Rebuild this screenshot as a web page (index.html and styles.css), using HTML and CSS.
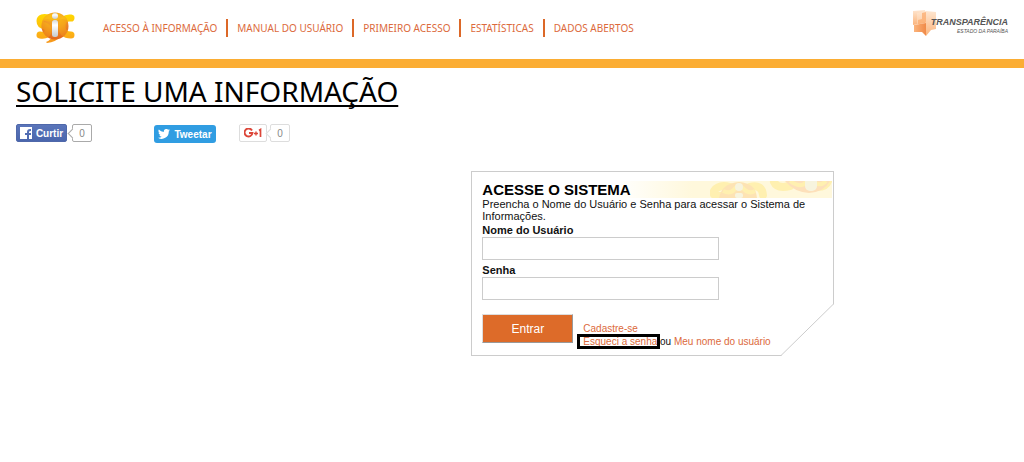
FILE: index.html
```html
<!DOCTYPE html>
<html lang="pt-BR">
<head>
<meta charset="utf-8">
<title>Solicite uma informação</title>
<link rel="stylesheet" href="styles.css">
</head>
<body>
<header class="top">
  <a class="sic" href="#" aria-label="SIC">
    <svg width="40" height="32" viewBox="0 0 40 32">
      <defs>
        <radialGradient id="ball" cx=".5" cy=".2" r=".8"><stop offset="0" stop-color="#f9b01c"/><stop offset=".5" stop-color="#f09428"/><stop offset="1" stop-color="#e2661f"/></radialGradient>
        <linearGradient id="pearl" x1="0" y1="0" x2="0" y2="1"><stop offset="0" stop-color="#d5d7d9"/><stop offset=".3" stop-color="#fff"/><stop offset="1" stop-color="#c5cace"/></linearGradient>
        <linearGradient id="gs" gradientUnits="userSpaceOnUse" x1="0" y1="2" x2="0" y2="28"><stop offset="0" stop-color="#ffd800"/><stop offset="1" stop-color="#fba51a"/></linearGradient>
        <clipPath id="disc"><circle cx="19" cy="14" r="13.500"/></clipPath>
      </defs>
      <path d="M10 30Q15 28 16 24L24 25Q20 30 11 31Z" fill="#f79a1c"/>
      <g id="letters" fill="none" stroke="url(#gs)" stroke-width="7" stroke-linecap="round">
        <path d="M13 6Q4 4 4 9Q4 13 9 14Q13 16 12 20Q11 24 4 23"/>
        <path d="M35 6Q26 5 26 14.500Q26 23 35 23"/>
      </g>
      <circle cx="19" cy="14" r="13.500" fill="url(#ball)"/>
      <use href="#letters" opacity=".35" clip-path="url(#disc)"/>
      <path d="M7 8Q11 1 19 1Q27 1 31 8Q25 6 19 9Q13 6 7 8Z" fill="#ffc715" opacity=".5"/>
      <circle cx="19" cy="4" r="3" fill="url(#pearl)"/>
      <rect x="16" y="8" width="6" height="17" rx="2.500" fill="url(#pearl)"/>
    </svg>
  </a>
  <nav class="menu">
    <a href="#">ACESSO À INFORMAÇÃO</a>
    <a href="#">MANUAL DO USUÁRIO</a>
    <a href="#">PRIMEIRO ACESSO</a>
    <a href="#">ESTATÍSTICAS</a>
    <a href="#">DADOS ABERTOS</a>
  </nav>
  <a class="transparency" href="#">
    <svg width="24" height="28" viewBox="0 0 24 28">
      <defs>
        <linearGradient id="pale" x1="0" y1="0" x2="0" y2="1"><stop offset="0" stop-color="#fee6d0"/><stop offset="1" stop-color="#fbb47c"/></linearGradient>
        <linearGradient id="deep" x1="0" y1="0" x2="1" y2="0"><stop offset="0" stop-color="#fbb47c"/><stop offset="1" stop-color="#f08a48"/></linearGradient>
      </defs>
      <path d="M0 1L12 0V13L0 15Z" fill="url(#pale)"/>
      <path d="M4 3L13 1L23 2V19L18 20L13 26V12L4 14Z" fill="url(#pale)"/>
      <path d="M9 3L13 2V13L5 14V10L9 9Z" fill="#fba868" opacity=".7"/>
      <path d="M1 15L13 13V26L9 22L1 22Z" fill="url(#deep)"/>
    </svg>
    <span class="transparency-text"><b>TRANSPARÊNCIA</b><i>ESTADO DA PARAÍBA</i></span>
  </a>
</header>
<main>
  <h1>SOLICITE UMA INFORMAÇÃO</h1>
  <div class="social">
    <div class="share like">
      <button type="button" class="fb"><svg width="12" height="12" viewBox="0 0 12 12"><path d="M0 0H12V12H9V8H11V6H9V5Q9 4 11 4V2Q7 1.500 7 5V6H5V8H7V12H0Z" fill="#fff"/></svg>Curtir</button>
      <span class="count">0</span>
    </div>
    <button type="button" class="tweet"><svg width="12" height="10" viewBox="0 0 24 20"><path d="M24 2.400a10 10 0 0 1-2.800.8A5 5 0 0 0 23.300.400a10 10 0 0 1-3.100 1.200A4.900 4.900 0 0 0 11.800 6 14 14 0 0 1 1.700.9a4.900 4.900 0 0 0 1.500 6.600 5 5 0 0 1-2.200-.6 4.900 4.900 0 0 0 3.900 4.900 5 5 0 0 1-2.200.1 4.900 4.900 0 0 0 4.600 3.400A10 10 0 0 1 0 17.400 14 14 0 0 0 21.500 5Z" fill="#fff"/></svg>Tweetar</button>
    <div class="share plus">
      <button type="button" class="google" aria-label="G+1"><svg width="18" height="10" viewBox="0 0 18 10" fill="none" stroke="#dc4639" stroke-width="1.900"><path d="M8 2.500A4 4 0 1 0 8.500 5H5"/><path d="M10 5.500H14M12 3.500V7.500" stroke-width="1.400"/><path d="M15 2.500L16.500 1.500V9" stroke-width="1.700"/></svg></button>
      <span class="count pale">0</span>
    </div>
  </div>
  <form class="login">
    <svg class="corner" width="53" height="52" viewBox="0 0 53 52"><path d="M53 0V52H0Z" fill="#fff"/><path d="M52.500 0L0 51.500" stroke="#ccc" fill="none"/></svg>
    <div class="banner">
      <h2>ACESSE O SISTEMA</h2>
      <svg width="122" height="17" viewBox="0 0 122 17">
        <g fill="none" stroke="#fff0b0" stroke-width="8" stroke-linecap="round"><path d="M17 14Q1 17 4 10Q9 3 20 6M40 6Q52 3 53 14"/><path d="M64 1Q67 8 80 5M100 5Q115 8 118 0"/></g>
        <path d="M9 17Q12 2 29 1Q46 2 47 17Z" fill="#fde3b4"/>
        <path d="M13 10Q22 14 26 6M32 6Q38 14 45 10" stroke="#fff0b0" stroke-width="4" fill="none"/>
        <path d="M75 0H120Q114 11 99 12Q84 11 75 0Z" fill="#fde0ba"/>
        <path d="M80 0Q91 8 96 1M104 1Q110 6 116 0" stroke="#fff0b0" stroke-width="4" fill="none"/>
        <g fill="#f7f4de"><circle cx="29" cy="6" r="4"/><rect x="25" y="12" width="8" height="5" rx="2"/><rect x="95" y="-4" width="12" height="14" rx="5"/></g>
      </svg>
    </div>
    <p>Preencha o Nome do Usuário e Senha para acessar o Sistema de Informações.</p>
    <label for="user">Nome do Usuário</label>
    <input id="user" type="text">
    <label for="password">Senha</label>
    <input id="password" type="password">
    <div class="actions">
      <button type="submit" class="enter">Entrar</button>
      <div class="links">
        <a href="#">Cadastre-se</a>
        <div><a class="marked" href="#">Esqueci a senha</a> ou <a href="#">Meu nome do usuário</a></div>
      </div>
    </div>
  </form>
</main>
</body>
</html>
```
FILE: styles.css
```css
* { box-sizing: border-box; }
body { margin: 0; background: #fff; color: #111; font-family: "Liberation Sans", Arial, sans-serif; }
a { color: #dc6a3c; text-decoration: none; }
svg { display: block; flex: none; }
button { font-family: inherit; padding: 0; cursor: pointer; }

.top { display: flex; align-items: center; height: 68px; padding: 0 16px 4px 36px; border-bottom: 9px solid #fbad33; }
.menu { display: flex; align-items: center; margin-left: 27px; font: 10px/18px "Noto Sans", sans-serif; }
.menu a { white-space: nowrap; }
.menu a + a { margin-left: 9px; padding-left: 9px; border-left: 2px solid #dc6828; }
.transparency { display: flex; margin: -8px 0 0 auto; color: #555; }
.transparency-text { display: flex; flex-direction: column; align-items: flex-end; margin: 7px 0 0 -6px; white-space: nowrap; }
.transparency b { font: italic bold 9px/10px "Liberation Sans", sans-serif; }
.transparency i { font-size: 5px; line-height: 8px; }

main { padding: 0 16px; }
h1 { margin: 0; font: 28px/46px "Noto Sans", sans-serif; color: #000; text-decoration: underline; text-decoration-thickness: 2px; text-decoration-skip-ink: none; text-underline-offset: 3px; }
.social { display: flex; margin-top: 10px; height: 18px; }
.share { display: flex; gap: 5px; }
.like { width: 138px; }
.plus { margin-left: 23px; gap: 3px; }
.social button { display: flex; align-items: center; justify-content: center; gap: 4px; height: 18px; border: 0; border-radius: 2px; color: #fff; font-size: 10px; font-weight: bold; }
.social .fb { width: 51px; background: linear-gradient(#5a75ba, #4a66ad); border: 1px solid #4f68aa; }
.social .tweet { width: 62px; margin-top: 1px; background: #309de2; border-radius: 3px; }
.social .google { width: 28px; border: 1px solid #ddd; background: #fff; }
.count { position: relative; width: 20px; height: 18px; border: 1px solid #aaa; border-radius: 2px; color: #888; font-size: 10px; line-height: 17px; text-align: center; }
.count::before { content: ""; position: absolute; left: -4px; top: 5px; width: 6px; height: 6px; background: #fff; border: solid #aaa; border-width: 0 0 1px 1px; transform: rotate(45deg); }
.pale, .pale::before { border-color: #ddd; }

.login { position: relative; width: 363px; margin: 29px 0 0 45.9%; padding: 9px 1px 7px 10px; border: 1px solid #ccc; font-size: 11px; line-height: 13px; }
.corner { position: absolute; right: -1px; bottom: -1px; }
.banner { display: flex; justify-content: space-between; height: 17px; background: linear-gradient(90deg, #fff 38%, #fff8dc 60%, #fff8dc); }
h2 { margin: 0; color: #000; font-size: 15px; line-height: 17px; }
p { margin: 0; padding: 0 24px 2px 0; line-height: 12px; }
label { display: block; font-weight: bold; line-height: 13px; }
.login input { display: block; width: 237px; height: 23px; margin-bottom: 4px; padding: 2px 4px; border: 1px solid #ccc; font-size: 12px; }
.actions { display: flex; align-items: flex-end; gap: 10px; margin-top: 14px; }
.enter { width: 91px; height: 29px; margin-bottom: 5px; background: #dd6b29; color: #fff; border: 1px solid; border-color: #ddd #999 #999 #ddd; font-size: 12px; }
.links { font-size: 10px; line-height: 13px; white-space: nowrap; }
.marked { position: relative; }
.marked::after { content: ""; position: absolute; inset: -2px -3px -2px -6px; border: 3px solid #000; }
```
